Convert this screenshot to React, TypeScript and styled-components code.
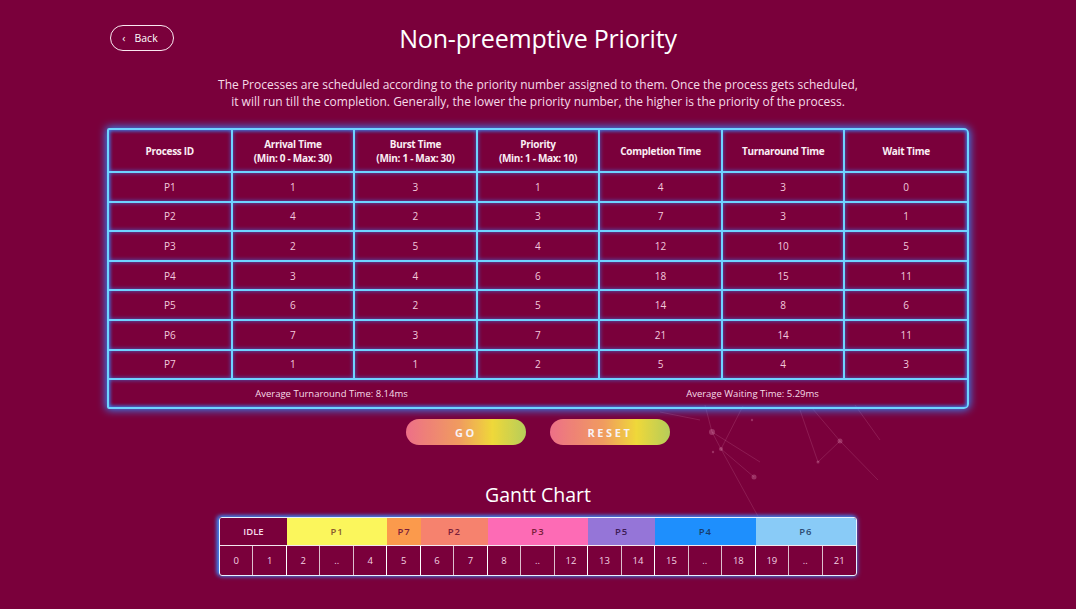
import React from "react";
import styled, { createGlobalStyle } from "styled-components";

const Global = createGlobalStyle`
  html, body { margin: 0; padding: 0; background: #7a003b; }
  body { font-family: "Open Sans", "Noto Sans", sans-serif; color: #fff; }
  * { box-sizing: border-box; }
`;

const Page = styled.div`
  position: relative;
  width: 1076px;
  height: 609px;
  overflow: hidden;
  background: #7a003b;
  display: flex;
  flex-direction: column;
  align-items: center;
`;

const Decor = styled.svg`
  position: absolute;
  left: 0;
  top: 0;
  width: 1076px;
  height: 609px;
  pointer-events: none;
`;

const Header = styled.header`
  width: 100%;
  display: grid;
  grid-template-columns: 1fr auto 1fr;
  align-items: center;
  padding: 24px 110px 0;
  position: relative;
`;

const BackButton = styled.button`
  justify-self: start;
  width: 64px;
  height: 26px;
  border: 1.5px solid #fbe9f1;
  border-radius: 13px;
  background: transparent;
  color: #fff;
  font-family: "Open Sans", sans-serif;
  font-size: 10.5px;
  display: flex;
  align-items: center;
  justify-content: center;
  gap: 9px;
  padding: 0 4px 0 0;
`;

const Title = styled.h1`
  margin: 0;
  font-size: 25px;
  font-weight: 500;
  letter-spacing: -0.2px;
  line-height: 28px;
`;

const Description = styled.p`
  margin: 24px 0 0;
  text-align: center;
  font-size: 12px;
  line-height: 17px;
  color: #f6dbe8;
  width: 760px;
  position: relative;
`;

const TableWrap = styled.div`
  margin-top: 18px;
  width: 862px;
  border: 2px solid #6fd3ff;
  border-radius: 2px 5px 5px 2px;
  box-shadow: 0 0 8px 1px #2f8cff, inset 0 0 4px #2f8cff;
  position: relative;
`;

const Table = styled.table`
  width: 100%;
  border-collapse: collapse;
  table-layout: fixed;
  text-align: center;
`;

const Th = styled.th`
  height: 42px;
  font-size: 10px;
  font-weight: 700;
  line-height: 14px;
  color: #fbeef4;
  letter-spacing: -0.3px;
  border-right: 2px solid #6fd3ff;
  border-bottom: 2px solid #6fd3ff;
  box-shadow: inset 0 0 4px rgba(47, 140, 255, 0.7);
  &:last-child { border-right: none; }
`;

const Td = styled.td`
  height: 29.6px;
  font-size: 10px;
  color: #f3c9dd;
  border-right: 2px solid #6fd3ff;
  border-bottom: 2px solid #6fd3ff;
  box-shadow: inset 0 0 4px rgba(47, 140, 255, 0.7);
  &:last-child { border-right: none; }
`;

const Footer = styled.div`
  display: grid;
  grid-template-columns: 1fr 1fr;
  height: 27px;
  align-items: center;
  text-align: center;
  font-size: 9.5px;
  color: #f6dbe8;
  box-shadow: inset 0 0 4px rgba(47, 140, 255, 0.7);
`;

const FooterText = styled.span<{ $shift: number }>`
  transform: translateX(${(p) => p.$shift}px);
`;

const Buttons = styled.div`
  margin-top: 10px;
  display: flex;
  gap: 24px;
  position: relative;
`;

const GradButton = styled.button`
  width: 120px;
  height: 26px;
  border: none;
  border-radius: 13px;
  background: linear-gradient(90deg, #f4768c 0%, #f7a561 45%, #f6e43a 72%, #b9d85c 100%);
  color: #fff;
  font-family: "Open Sans", sans-serif;
  font-weight: 700;
  font-size: 11px;
  letter-spacing: 2.6px;
  opacity: 0.95;
`;

const GanttTitle = styled.h2`
  margin: 37px 0 0;
  font-size: 19.5px;
  font-weight: 500;
  line-height: 26px;
  position: relative;
`;

const Gantt = styled.div`
  margin-top: 9px;
  width: 638px;
  display: grid;
  grid-template-columns: repeat(19, 1fr);
  grid-template-rows: 28px 29px;
  border: 1.5px solid #e8f2ff;
  border-radius: 3px;
  box-shadow: -2px -1px 4px #3a8dff, 0 0 5px rgba(58, 141, 255, 0.8);
  overflow: hidden;
  position: relative;
`;

const Block = styled.div<{ $span: number; $bg: string; $fg: string; $ls: number }>`
  grid-column: span ${(p) => p.$span};
  background: ${(p) => p.$bg};
  color: ${(p) => p.$fg};
  display: flex;
  align-items: center;
  justify-content: center;
  font-size: 9.5px;
  font-weight: 600;
  letter-spacing: ${(p) => p.$ls}px;
  border-bottom: 1px solid #f3e8ee;
`;

const Tick = styled.div<{ $edge: boolean }>`
  display: flex;
  align-items: center;
  justify-content: center;
  font-size: 9.5px;
  color: #f3d3e2;
  border-right: 1px solid ${(p) => (p.$edge ? "#fff" : "rgba(255,255,255,0.75)")};
  &:last-child { border-right: none; }
`;

const headers: React.ReactNode[] = [
  "Process ID",
  <>Arrival Time<br />(Min: 0 - Max: 30)</>,
  <>Burst Time<br />(Min: 1 - Max: 30)</>,
  <>Priority<br />(Min: 1 - Max: 10)</>,
  "Completion Time",
  "Turnaround Time",
  "Wait Time",
];

const rows = [
  ["P1", 1, 3, 1, 4, 3, 0],
  ["P2", 4, 2, 3, 7, 3, 1],
  ["P3", 2, 5, 4, 12, 10, 5],
  ["P4", 3, 4, 6, 18, 15, 11],
  ["P5", 6, 2, 5, 14, 8, 6],
  ["P6", 7, 3, 7, 21, 14, 11],
  ["P7", 1, 1, 2, 5, 4, 3],
];

const blocks = [
  { label: "IDLE", span: 2, bg: "#7a003b", fg: "#f6dbe8", ls: 0, ticks: ["0", "1"] },
  { label: "P1", span: 3, bg: "#fbf65c", fg: "#8a5a2e", ls: 1, ticks: ["2", "..", "4"] },
  { label: "P7", span: 1, bg: "#fb9a4c", fg: "#7a1e3a", ls: 1, ticks: ["5"] },
  { label: "P2", span: 2, bg: "#f6826e", fg: "#7a1e3a", ls: 1, ticks: ["6", "7"] },
  { label: "P3", span: 3, bg: "#fd6bb5", fg: "#7a1e3a", ls: 1, ticks: ["8", "..", "12"] },
  { label: "P5", span: 2, bg: "#9575d8", fg: "#3d1b55", ls: 1, ticks: ["13", "14"] },
  { label: "P4", span: 3, bg: "#1e8ffd", fg: "#173d6e", ls: 1, ticks: ["15", "..", "18"] },
  { label: "P6", span: 3, bg: "#89cbf7", fg: "#2b4a72", ls: 1, ticks: ["19", "..", "21"] },
];

const ticks: { t: string; edge: boolean }[] = [];
blocks.forEach((b) => b.ticks.forEach((t, i) => ticks.push({ t, edge: i === b.ticks.length - 1 })));

const lines: [number, number, number, number][] = [
  [712, 432, 705, 405],
  [712, 432, 721, 449],
  [721, 449, 743, 406],
  [721, 449, 754, 477],
  [712, 432, 760, 462],
  [721, 449, 760, 520],
  [812, 408, 840, 441],
  [840, 441, 878, 480],
  [855, 405, 880, 440],
  [840, 441, 818, 462],
  [800, 410, 818, 462],
  [660, 412, 700, 420],
];
const dots: [number, number, number][] = [
  [712, 432, 3],
  [721, 449, 2],
  [754, 477, 2.5],
  [840, 441, 2.5],
  [818, 462, 1.5],
  [713, 452, 1.2],
  [752, 420, 1.2],
];

export default function App() {
  return (
    <>
      <Global />
      <Page>
        <Decor viewBox="0 0 1076 609">
          {lines.map(([x1, y1, x2, y2], i) => (
            <line key={i} x1={x1} y1={y1} x2={x2} y2={y2} stroke="rgba(255,190,220,0.18)" strokeWidth="0.8" />
          ))}
          {dots.map(([cx, cy, r], i) => (
            <circle key={i} cx={cx} cy={cy} r={r} fill="rgba(255,190,220,0.25)" />
          ))}
        </Decor>
        <Header>
          <BackButton>
            <span>‹</span>
            <span>Back</span>
          </BackButton>
          <Title>Non-preemptive Priority</Title>
          <span />
        </Header>
        <Description>
          The Processes are scheduled according to the priority number assigned to them. Once the process gets scheduled,
          <br />
          it will run till the completion. Generally, the lower the priority number, the higher is the priority of the process.
        </Description>
        <TableWrap>
          <Table>
            <thead>
              <tr>
                {headers.map((h, i) => (
                  <Th key={i}>{h}</Th>
                ))}
              </tr>
            </thead>
            <tbody>
              {rows.map((r) => (
                <tr key={r[0] as string}>
                  {r.map((c, i) => (
                    <Td key={i}>{c}</Td>
                  ))}
                </tr>
              ))}
            </tbody>
          </Table>
          <Footer>
            <FooterText $shift={8}>Average Turnaround Time: 8.14ms</FooterText>
            <FooterText $shift={0}>Average Waiting Time: 5.29ms</FooterText>
          </Footer>
        </TableWrap>
        <Buttons>
          <GradButton>GO</GradButton>
          <GradButton>RESET</GradButton>
        </Buttons>
        <GanttTitle>Gantt Chart</GanttTitle>
        <Gantt>
          {blocks.map((b) => (
            <Block key={b.label} $span={b.span} $bg={b.bg} $fg={b.fg} $ls={b.ls}>
              {b.label}
            </Block>
          ))}
          {ticks.map((t, i) => (
            <Tick key={i} $edge={t.edge}>
              {t.t}
            </Tick>
          ))}
        </Gantt>
      </Page>
    </>
  );
}
